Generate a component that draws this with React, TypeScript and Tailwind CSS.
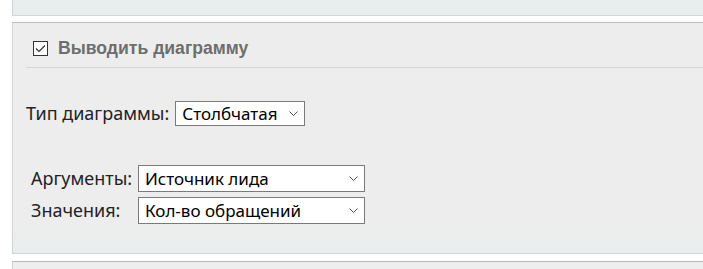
import React from "react";

const Chevron = () => (
  <svg width="9" height="5" viewBox="0 0 9 5" className="shrink-0">
    <path d="M0.5 0.5 L4.5 4.5 L8.5 0.5" fill="none" stroke="#555" strokeWidth="1" />
  </svg>
);

const FakeSelect = ({ value, className }: { value: string; className: string }) => (
  <div
    className={`flex items-center justify-between border border-[#7a7a7a] bg-white pl-[6px] pr-[6px] text-[17px] leading-none text-black ${className}`}
  >
    <span>{value}</span>
    <Chevron />
  </div>
);

export default function App() {
  return (
    <div className="h-[269px] w-[703px] overflow-hidden bg-white pl-[12px] font-['Noto_Sans',sans-serif]">
      <div className="h-[16px] border-b border-l border-[#d2d8d8] bg-[#e8eeee]" />

      <div className="mt-[6px] h-[232px] border-l border-t border-b border-l-[#d4d4d4] border-t-[#b8bcbc] border-b-[#d0d8d8] bg-[linear-gradient(to_bottom,#ededed_0%,#ededed_88%,#e8eeee_100%)] pl-[13px]">
        <div className="flex h-[45px] items-center gap-[10px] border-b border-[#d6d6d6] pl-[7px] pt-[7px]">
          <div className="flex h-[15px] w-[15px] items-center justify-center border border-[#333] bg-white">
            <svg width="11" height="9" viewBox="0 0 11 9">
              <path d="M1 4.5 L4 7.5 L10 1.5" fill="none" stroke="#333" strokeWidth="1.2" />
            </svg>
          </div>
          <span className="font-['Liberation_Sans',sans-serif] text-[17.6px] font-bold text-[#6e6e6e]">
            Выводить диаграмму
          </span>
        </div>

        <div className="mt-[32px] flex items-center gap-[6px] text-[18px] text-[#222]">
          <span>Тип диаграммы:</span>
          <FakeSelect value="Столбчатая" className="h-[25px] w-[130px]" />
        </div>

        <div className="mt-[38px] grid grid-cols-[107px_227px] gap-y-[5px] pl-[5px] text-[18px] text-[#222]">
          <span className="self-center">Аргументы:</span>
          <FakeSelect value="Источник лида" className="h-[27px]" />
          <span className="self-center">Значения:</span>
          <FakeSelect value="Кол-во обращений" className="h-[27px]" />
        </div>
      </div>

      <div className="mt-[7px] h-[20px] border-l border-t border-l-[#d4d4d4] border-t-[#b8b8b8] bg-[#eeeeee]" />
    </div>
  );
}
